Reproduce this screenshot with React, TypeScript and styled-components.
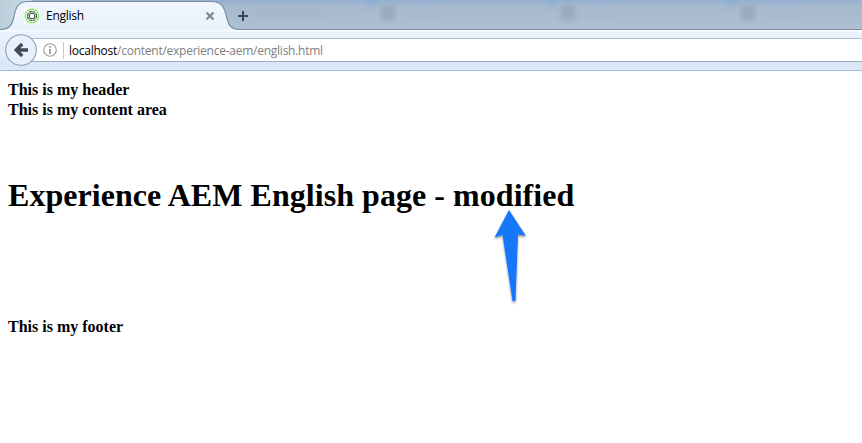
import React from 'react';
import styled, { createGlobalStyle } from 'styled-components';

const GlobalStyle = createGlobalStyle`
  body { margin: 0; background: #fff; overflow: hidden; }
  * { box-sizing: border-box; }
`;

const Window = styled.div`
  width: 862px;
  height: 443px;
  overflow: hidden;
  background: #fff;
`;

const TabStrip = styled.div`
  position: relative;
  display: flex;
  align-items: flex-start;
  height: 30px;
  overflow: hidden;
  background: linear-gradient(#95b0d0 0, #a3b8d0 5px, #a9bbd0 14px, #afc0d3 29px);
`;

const Backdrop = styled.svg`
  position: absolute;
  inset: 0;
`;

const TabContent = styled.div`
  position: relative;
  display: flex;
  align-items: center;
  width: 216px;
  height: 30px;
  padding: 2px 0 0 24px;
`;

const TabTitle = styled.span`
  flex: 1;
  margin-left: 6px;
  font: 12px/16px 'Open Sans', 'Noto Sans', sans-serif;
  letter-spacing: -0.25px;
  color: #000;
`;

const NewTab = styled.svg`
  position: relative;
  margin: 10px 0 0 21px;
`;

const Toolbar = styled.div`
  display: flex;
  align-items: flex-start;
  height: 41px;
  padding: 4px 0 0 5px;
  background: linear-gradient(#fff 0, #eaf3fb 2px, #e7f1fb 10px, #dbe8f8 33px, #dce9f9 40px);
  border-bottom: 1px solid #a7b9d2;
`;

const BackButton = styled.svg`
  position: relative;
  flex: none;
`;

const AddressBar = styled.div`
  display: flex;
  align-items: center;
  flex: 1;
  height: 24px;
  margin: 4px 0 0 -14px;
  padding-left: 20px;
  background: #fff;
  border: solid #a9bcd3;
  border-width: 1px 0;
  border-bottom-color: #9dacc4;
`;

const Divider = styled.span`
  width: 1px;
  height: 17px;
  margin: 0 5px 0 6px;
  background: #c9c9c9;
`;

const Address = styled.span`
  padding-top: 2px;
  font: 12px/18px 'Open Sans', 'Noto Sans', sans-serif;
  letter-spacing: -0.25px;
  color: #808080;
  white-space: nowrap;
`;

const Host = styled.span`
  color: #000;
`;

const Page = styled.main`
  position: relative;
  padding: 9px 8px 0;
  font-family: 'Liberation Serif', serif;
  color: #000;
`;

const Line = styled.div`
  height: 20px;
  font-size: 16px;
  line-height: 20px;
  font-weight: bold;
`;

const Heading = styled.h1`
  height: 37px;
  margin: 57px 0 103px;
  font-size: 32px;
  line-height: 37px;
  font-weight: bold;
  letter-spacing: 0.05px;
  white-space: nowrap;
`;

const Pointer = styled.svg`
  position: absolute;
  left: 488px;
  top: 133px;
`;

const smudges = [388, 568, 748];

export default function App() {
  return (
    <Window>
      <GlobalStyle />
      <TabStrip>
        <Backdrop width="862" height="30">
          <defs>
            <linearGradient id="tab" x1="0" y1="0" x2="0" y2="1">
              <stop offset="0" stopColor="#f1f6fd" />
              <stop offset="1" stopColor="#e9f2fc" />
            </linearGradient>
            <linearGradient id="edge" x1="0" y1="0" x2="1" y2="0">
              <stop offset="0" stopColor="#b9cfda" />
              <stop offset="1" stopColor="#cbdde7" />
            </linearGradient>
            <filter id="soft" x="-50%" y="-50%" width="200%" height="200%">
              <feGaussianBlur stdDeviation="2.4" />
            </filter>
          </defs>
          <g filter="url(#soft)">
            {smudges.map((x) => (
              <g key={x}>
                <rect x={x - 7} y="5" width="14" height="16" fill="#9aaabb" />
                <rect x={x + 15} y="10" width="38" height="6" fill="#a3b5ca" opacity=".5" />
                <rect x={x - 21} y="-1" width="9" height="6" fill="#8cacd0" />
              </g>
            ))}
            <rect x="256" y="11" width="70" height="6" fill="#9fb2c8" opacity=".5" />
          </g>
          <rect width="32" height="30" fill="url(#edge)" />
          <rect y="29" width="862" height="1" fill="#778b9f" />
          <path d="M0 30V29.5C10 29.5 12 25 14 16.5C16 7 18 1.5 28 1.5H211C222 1.5 224 7 226.5 16.5C228.5 25 230 29.5 240 29.5V30Z" fill="url(#tab)" />
          <path d="M0 29.5C10 29.5 12 25 14 16.5C16 7 18 1.5 28 1.5H211C222 1.5 224 7 226.5 16.5C228.5 25 230 29.5 240 29.5" fill="none" stroke="#788da3" strokeWidth="1.1" />
        </Backdrop>
        <TabContent>
          <svg width="16" height="16" viewBox="0 0 16 16">
            <rect width="16" height="16" fill="#fff" />
            <circle cx="8" cy="8" r="6.8" fill="#fff" stroke="#7be35c" strokeWidth="1.2" />
            <circle cx="8" cy="8" r="4.6" fill="none" stroke="#34513c" strokeWidth="1.1" strokeDasharray="2.9 .71" />
            <circle cx="8" cy="8" r="2.8" fill="none" stroke="#34513c" strokeWidth="1" />
            <circle cx="8" cy="8" r="3.7" fill="none" stroke="#5d7563" strokeWidth=".8" strokeDasharray="1.2 1.7" />
          </svg>
          <TabTitle>English</TabTitle>
          <svg width="12" height="12" viewBox="0 0 12 12">
            <path d="M2.5 2.5L9.5 9.5M9.5 2.5L2.5 9.5" stroke="#7d8791" strokeWidth="2.2" />
          </svg>
        </TabContent>
        <NewTab width="12" height="12">
          <path d="M6 1V11M1 6H11" stroke="#3b4955" strokeWidth="2" />
        </NewTab>
      </TabStrip>
      <Toolbar>
        <BackButton width="32" height="32" viewBox="0 0 32 32">
          <circle cx="16" cy="16" r="15.3" fill="#e8f1fb" stroke="#8c9fb5" strokeWidth="1.1" />
          <path d="M23 16H12M17.2 10L11.2 16L17.2 22" fill="none" stroke="#424b55" strokeWidth="3.4" />
        </BackButton>
        <AddressBar>
          <svg width="14" height="14" viewBox="0 0 14 14">
            <circle cx="7" cy="7" r="6.3" fill="none" stroke="#999" strokeWidth="1.1" />
            <path d="M7 3V4.8M7 6V11" stroke="#999" strokeWidth="1.7" />
          </svg>
          <Divider />
          <Address>
            <Host>localhost</Host>/content/experience-aem/english.html
          </Address>
        </AddressBar>
      </Toolbar>
      <Page>
        <Line>This is my header</Line>
        <Line>This is my content area</Line>
        <Heading>Experience AEM English page - modified</Heading>
        <Line>This is my footer</Line>
        <Pointer width="48" height="106" viewBox="0 0 48 106">
          <defs>
            <filter id="shadow" x="-30%" y="-10%" width="160%" height="125%">
              <feDropShadow dx="0" dy="1.5" stdDeviation="1" floodColor="#000" floodOpacity=".45" />
            </filter>
          </defs>
          <path d="M21 6L38 32L30 30.5L27.5 97H24.5L14.5 31L6.5 33.5Z" fill="#1877fb" filter="url(#shadow)" />
        </Pointer>
      </Page>
    </Window>
  );
}
